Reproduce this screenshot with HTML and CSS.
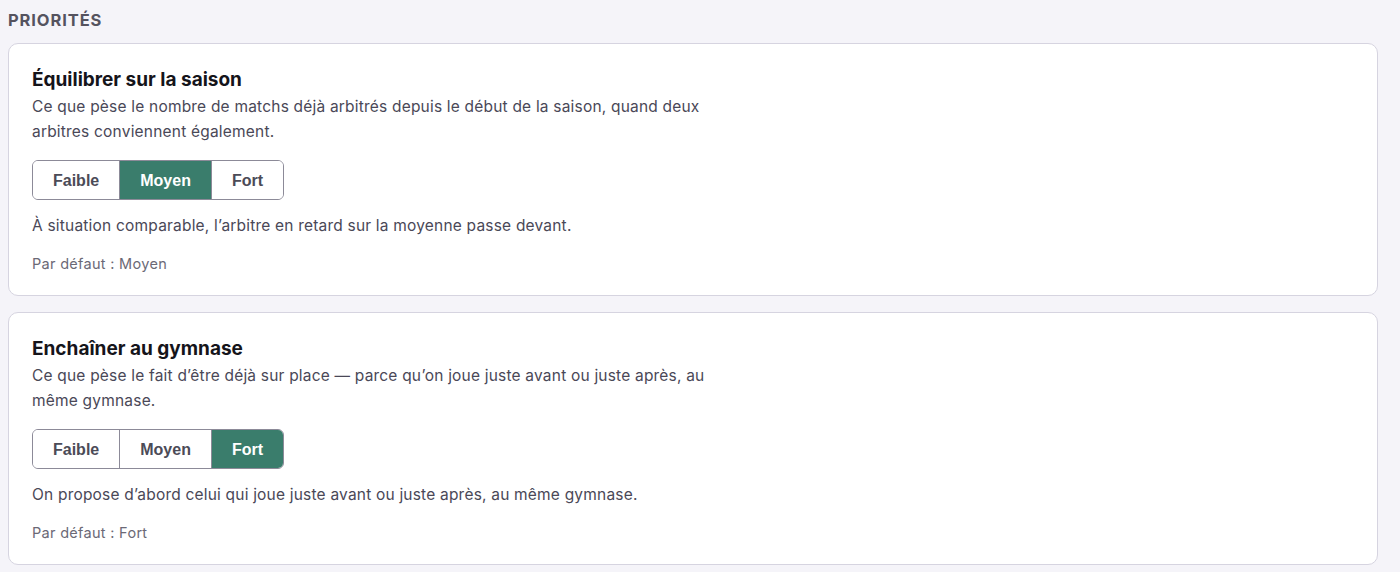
FILE: index.html
```html
<!DOCTYPE html>
<html lang="fr">
<head>
<meta charset="utf-8">
<title>Priorités</title>
<link rel="stylesheet" href="styles.css">
</head>
<body>

<h3 class="section-title">PRIORITÉS</h3>

<div class="card">
  <h4 class="card-title">Équilibrer sur la saison</h4>
  <p class="card-desc">Ce que pèse le nombre de matchs déjà arbitrés depuis le début de la saison, quand deux arbitres conviennent également.</p>
  <div class="segmented">
    <button>Faible</button>
    <button class="active">Moyen</button>
    <button>Fort</button>
  </div>
  <p class="card-note">À situation comparable, l’arbitre en retard sur la moyenne passe devant.</p>
  <p class="card-default">Par défaut : Moyen</p>
</div>

<div class="card">
  <h4 class="card-title">Enchaîner au gymnase</h4>
  <p class="card-desc">Ce que pèse le fait d’être déjà sur place — parce qu’on joue juste avant ou juste après, au même gymnase.</p>
  <div class="segmented">
    <button>Faible</button>
    <button>Moyen</button>
    <button class="active">Fort</button>
  </div>
  <p class="card-note">On propose d’abord celui qui joue juste avant ou juste après, au même gymnase.</p>
  <p class="card-default">Par défaut : Fort</p>
</div>

</body>
</html>
```

FILE: styles.css
```css
body {
  margin: 0;
  padding: 0 22px 0 8px;
  background-color: #f5f4f9;
  font-family: 'Inter', 'Noto Sans', sans-serif;
  color: #4a4857;
}

.section-title {
  margin: 10px 0 13px 0;
  font-size: 16.5px;
  line-height: 20px;
  font-weight: 700;
  color: #55535f;
  letter-spacing: 0.9px;
}

.card {
  background-color: #fff;
  border: 1px solid #d6d4e0;
  border-radius: 10px;
  padding: 24px 23px 21px 23px;
  margin-bottom: 16px;
}

.card-title {
  margin: 0;
  font-size: 19px;
  line-height: 24px;
  font-weight: 700;
  color: #15141a;
}

.card-desc {
  margin: 2px 0 0 0;
  max-width: 700px;
  font-size: 15.5px;
  line-height: 25px;
  letter-spacing: 0.2px;
}

.segmented {
  display: inline-flex;
  margin-top: 16px;
  border: 1px solid #8c8a98;
  border-radius: 6px;
  overflow: hidden;
}

.segmented button {
  height: 38px;
  padding: 1px 20px 0 20px;
  border: none;
  border-left: 1px solid #8c8a98;
  background-color: #fff;
  font-family: 'Liberation Sans', Arial, sans-serif;
  font-size: 16px;
  font-weight: bold;
  color: #4c4b57;
  cursor: pointer;
}

.segmented button:first-child {
  border-left: none;
}

.segmented button.active {
  background-color: #3a7d6c;
  color: #fff;
}

.card-note {
  margin: 14px 0 0 0;
  font-size: 15.5px;
  line-height: 24px;
  letter-spacing: 0.2px;
}

.card-default {
  margin: 16px 0 0 0;
  font-size: 14.5px;
  line-height: 20px;
  color: #6b6976;
  letter-spacing: 0.3px;
}
```
